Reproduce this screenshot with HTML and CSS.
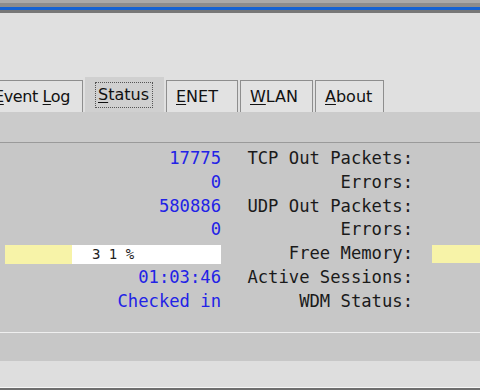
FILE: index.html
```html
<!DOCTYPE html>
<html lang="en">
<head>
  <meta charset="UTF-8">
  <title>Status</title>
  <link rel="stylesheet" href="styles.css">
</head>
<body>
  <div class="titlebar"></div>
  <div class="top"></div>

  <div class="tabs">
    <div class="tab first"><span><u>E</u>vent <u>L</u>og</span></div>
    <div class="tab active"><span class="focus"><u>S</u>tatus</span></div>
    <div class="tab"><span><u>E</u>NET</span></div>
    <div class="tab"><span><u>W</u>LAN</span></div>
    <div class="tab"><span><u>A</u>bout</span></div>
  </div>

  <div class="panel">
    <div class="panel-head"></div>
    <div class="stats">
      <div class="val">17775</div><div class="lbl">TCP Out Packets:</div><div></div>
      <div class="val">0</div><div class="lbl">Errors:</div><div></div>
      <div class="val">580886</div><div class="lbl">UDP Out Packets:</div><div></div>
      <div class="val">0</div><div class="lbl">Errors:</div><div></div>
      <div class="bar"><div class="fill" style="width:31%"></div><span>3 1 %</span></div>
      <div class="lbl">Free Memory:</div>
      <div class="bar right"></div>
      <div class="val">01:03:46</div><div class="lbl">Active Sessions:</div><div></div>
      <div class="val">Checked in</div><div class="lbl">WDM Status:</div><div></div>
    </div>
  </div>

  <div class="footer">
    <div class="footer-gray"></div>
    <div class="footer-light"></div>
  </div>
</body>
</html>
```

FILE: styles.css
```css
body {
  margin: 0;
  width: 480px;
  height: 390px;
  overflow: hidden;
  background: #e0e0e0;
  font-family: "DejaVu Sans", sans-serif;
}
.titlebar {
  height: 13px;
  box-sizing: border-box;
  background: #1462d2;
  border-top: 3px solid #a9a9a9;
  border-bottom: 3px solid #777;
  box-shadow: inset 0 4px 0 #8c8c8c;
}
.top {
  height: 64px;
  background: #e0e0e0;
}
.tabs {
  display: flex;
  align-items: flex-end;
  gap: 2px;
  height: 35px;
  margin-left: -15px;
}
.tab {
  box-sizing: border-box;
  flex-shrink: 0;
  white-space: nowrap;
  height: 32px;
  padding: 0 9px;
  display: flex;
  align-items: center;
  border: 1px solid #8e8e8e;
  border-bottom: none;
  background: #e2e2e2;
  color: #111;
  font-size: 16px;
}
.tab u {
  text-decoration-thickness: 1px;
  text-underline-offset: 2px;
}
.tab.first {
  width: 98px;
  justify-content: flex-end;
  padding-right: 12px;
  letter-spacing: -0.4px;
}
.tab.active {
  height: 35px;
  width: 79px;
  padding: 0 0 0 10px;
  border: none;
  background: #d0d0d0;
}
.focus {
  border: 1px dotted #555;
  padding: 2px 3px 3px 2px;
}
.tab:nth-child(3) { width: 72px; }
.tab:nth-child(4) { width: 73px; }
.tab:nth-child(5) { width: 69px; }
.panel {
  background: #c7c7c7;
  height: 220px;
}
.panel-head {
  height: 30px;
  background: #cbcbcb;
  border-bottom: 1px solid #9a9a9a;
}
.stats {
  display: grid;
  grid-template-columns: 216px 192px 1fr;
  grid-auto-rows: 23.8px;
  padding: 4px 0 0 5px;
  font-family: "DejaVu Sans Mono", monospace;
  font-size: 17.2px;
}
.val {
  text-align: right;
  color: #2222e6;
  line-height: 23.8px;
}
.lbl {
  text-align: right;
  color: #1a1a1a;
  line-height: 23.8px;
}
.bar {
  position: relative;
  align-self: center;
  height: 19px;
  background: #fff;
}
.bar .fill {
  height: 100%;
  background: #f7f3a8;
}
.bar span {
  position: absolute;
  left: 0;
  right: 0;
  top: 0;
  text-align: center;
  font-size: 14px;
  line-height: 19px;
  color: #222;
}
.bar.right {
  margin-left: 19px;
  height: 18px;
  background: #f7f3a8;
}
.footer {
  border-top: 1px solid #efefef;
  border-bottom: 3px solid #6e6e6e;
}
.footer-gray {
  height: 28px;
  background: #c7c7c7;
}
.footer-light {
  height: 26px;
  background: #dedede;
  border-bottom: 1px solid #f6f6f6;
}
```
